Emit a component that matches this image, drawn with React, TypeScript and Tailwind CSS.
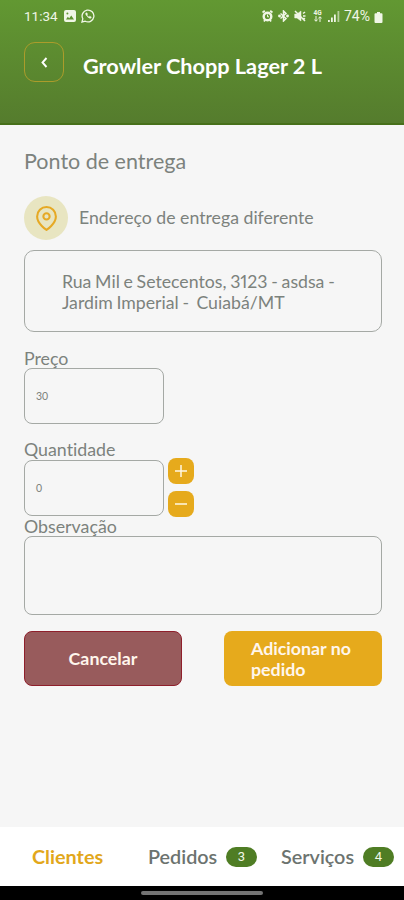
import type { ReactNode } from "react";
import { FiMapPin } from "react-icons/fi";

const StatusBar = () => (
    <div className="flex h-8 items-center justify-between pl-6 pr-[21px] font-['Roboto',sans-serif] text-[13.5px] text-[#f0f6e6]">
        <div className="flex items-center gap-[5px]">
            <span className="w-[35px] whitespace-nowrap">11:34</span>
            <svg width="12" height="12" viewBox="0 0 12 12">
                <path fillRule="evenodd" fill="currentColor" d="M2 0h8a2 2 0 0 1 2 2v8a2 2 0 0 1-2 2H2a2 2 0 0 1-2-2V2a2 2 0 0 1 2-2ZM2 9.5h8L7.3 5.6 5.2 8.2 3.8 6.8ZM3.4 2.6a1 1 0 1 0 0 2 1 1 0 0 0 0-2Z" />
            </svg>
            <svg width="14" height="14" viewBox="0 0 14 14" fill="none" stroke="currentColor" strokeWidth="1.3">
                <path d="M1 13l.8-3.2A5.9 5.9 0 1 1 4.2 12.2Z" />
                <path d="M4.7 4.2c-.5 1.5 2.6 5.1 4.9 5.1l.8-1.2-1.7-.9-.8.7C7 7.6 6.3 6.9 6 6l.6-.8L5.8 3.7Z" fill="currentColor" strokeWidth="0.5" />
            </svg>
        </div>
        <div className="flex items-center">
            {/* Alarm */}
            <svg className="mr-[5px]" width="11" height="12" viewBox="0 0 11 12" fill="none" stroke="currentColor">
                <path d="M.5 2.5 2.8.7M10.5 2.5 8.2.7M2 11.5l1-1.5M9 11.5 8 10" strokeWidth="1.8" />
                <circle cx="5.5" cy="6.5" r="3.8" strokeWidth="2.4" />
                <path d="M5.5 4.5v2.3h1.5" />
            </svg>
            {/* Bluetooth */}
            <svg className="mr-[5px]" width="11" height="12" viewBox="0 0 11 12" fill="none" stroke="currentColor" strokeWidth="1.5">
                <path d="m2.5 3.5 5.5 5L5.5 11V1L8 3.5l-5.5 5" />
                <circle cx="1.5" cy="6" r=".7" />
                <circle cx="9.5" cy="6" r=".7" />
            </svg>
            {/* Muted */}
            <svg className="mr-[7px]" width="12" height="12" viewBox="0 0 12 12" fill="none" stroke="currentColor">
                <path d="M.7 4h2.3L7 1v10L3 8H.7Z" fill="currentColor" strokeWidth=".5" />
                <path d="m1 1 10 10M9 3.5l2-1.5M9 6h2.5M9.5 8l1.5 1" strokeWidth="1.5" />
            </svg>
            <div className="mr-[6px] flex w-[9px] flex-col items-center text-[6.5px] font-bold leading-[6px]">
                <span>4G</span>
                <svg width="8" height="6" viewBox="0 0 8 6" fill="none" stroke="currentColor">
                    <path d="M2 0v5M.3 3.5 2 5.3l1.7-1.8M6 6V1M4.3 2.5 6 .7l1.7 1.8" />
                </svg>
            </div>
            <svg className="mr-[4px]" width="12" height="12" viewBox="0 0 12 12" fill="currentColor">
                <path d="M0 10h1.8v2H0zM3 7.5h1.8V12H3zM6 4.5h1.8V12H6z" />
                <path d="M9.5 1h1.8v11H9.5z" opacity=".6" />
            </svg>
            <span className="w-[30px] whitespace-nowrap text-[14px]">74%</span>
            <svg className="mt-[2px]" width="9" height="11" viewBox="0 0 9 11" fill="currentColor">
                <path d="M3 0h3v1.3h1.5a1 1 0 0 1 1 1V10a1 1 0 0 1-1 1h-6a1 1 0 0 1-1-1V2.3a1 1 0 0 1 1-1H3Z" />
            </svg>
        </div>
    </div>
);

const Label = ({ children }: { children: ReactNode }) => (
    <label className="block h-[19px] whitespace-nowrap text-[17.8px] leading-[19px]">{children}</label>
);

const Stepper = ({ d }: { d: string }) => (
    <button className="flex size-[26px] items-center justify-center rounded-[8px] bg-[#e6aa1c]">
        <svg width="12" height="12" viewBox="0 0 12 12" fill="none" stroke="#fff8e4" strokeWidth="1.5">
            <path d={d} />
        </svg>
    </button>
);

const Badge = ({ children }: { children: ReactNode }) => (
    <span className="flex h-5 w-[31px] items-center justify-center rounded-full bg-[#4f7d24] font-['Roboto',sans-serif] text-[13px] font-normal text-[#f2f8e8]">
        {children}
    </span>
);

const App = () => {
    return (
        <div className="flex h-[900px] w-[404px] flex-col overflow-hidden bg-[#f6f6f6] font-['Lato',sans-serif] text-[#7c827d] [font-variant-ligatures:none]">
            <header className="h-[125px] shrink-0 border-b-2 border-[#47701a] bg-linear-to-b from-[#629832] to-[#557c2d]">
                <StatusBar />
                <div className="flex items-center pl-6 pt-[10px]">
                    <button className="flex size-10 items-center justify-center rounded-[11px] border border-[#ab9c2b] text-white">
                        <svg width="7" height="11" viewBox="0 0 7 11" fill="none" stroke="currentColor" strokeWidth="1.9">
                            <path d="M5.5 1 1.5 5.5l4 4.5" />
                        </svg>
                    </button>
                    <h1 className="ml-[19px] mt-[8px] whitespace-nowrap text-[21.7px] font-bold leading-7 text-white">Growler Chopp Lager 2 L</h1>
                </div>
            </header>

            <main className="flex-1 pl-6 pr-[22px] pt-[22px]">
                <h2 className="text-[21.5px] leading-7">Ponto de entrega</h2>
                <div className="mt-[21px] flex items-center gap-[11px]">
                    <div className="flex size-11 items-center justify-center rounded-full bg-[#e8e5c1] text-[#e6a925]">
                        <FiMapPin size={25} />
                    </div>
                    <span className="whitespace-nowrap text-[17.7px]">Endereço de entrega diferente</span>
                </div>

                <div className="mt-[10px] h-[82px] whitespace-pre rounded-[10px] border border-[#a5a9a5] pl-[37px] pt-5 text-[17.7px] proportional-nums leading-[21px] [word-spacing:-0.8px]">
                    {"Rua Mil e Setecentos, 3123 - asdsa -\nJardim Imperial -  Cuiabá/MT"}
                </div>

                <div className="mt-[17px]">
                    <Label>Preço</Label>
                    <div className="flex h-14 w-[140px] items-center rounded-[8px] border border-[#a5a9a5] pl-[11px] pt-[2px] text-[10.5px]">30</div>
                </div>

                <div className="mt-4">
                    <Label>Quantidade</Label>
                    <div className="mt-px flex gap-1">
                        <div className="flex h-14 w-[140px] items-center rounded-[8px] border border-[#a5a9a5] pl-[11px] pt-[2px] text-[10.5px]">0</div>
                        <div className="-mt-[2px] flex h-[59px] flex-col justify-between">
                            <Stepper d="M6 0v12M0 6h12" />
                            <Stepper d="M0 6h12" />
                        </div>
                    </div>
                </div>

                <div>
                    <Label>Observação</Label>
                    <div className="h-[79px] rounded-[8px] border border-[#a5a9a5]" />
                </div>

                <div className="mt-4 flex justify-between text-[17.8px] font-bold leading-[21px] text-[#fff6ec]">
                    <button className="h-[55px] w-[158px] rounded-[8px] border border-[#8f1f2b] bg-[#985b5c]">Cancelar</button>
                    <button className="h-[55px] w-[158px] rounded-[8px] bg-[#e6aa1c] pl-[27px] text-left">
                        Adicionar no
                        <br />
                        pedido
                    </button>
                </div>
            </main>

            <nav className="flex h-[59px] shrink-0 items-center bg-white pl-8 pt-px text-[19.8px] font-semibold text-[#6c736f]">
                <span className="w-[116px] font-bold text-[#e2a71b]">Clientes</span>
                <div className="flex w-[133px] items-center justify-between pr-[24px]">
                    Pedidos
                    <Badge>3</Badge>
                </div>
                <div className="flex w-[113px] items-center justify-between">
                    Serviços
                    <Badge>4</Badge>
                </div>
            </nav>
            <div className="flex h-[14px] shrink-0 justify-center bg-black pt-[5px]">
                <div className="h-1 w-[122px] rounded-full bg-[#737373]" />
            </div>
        </div>
    );
};

export default App;
